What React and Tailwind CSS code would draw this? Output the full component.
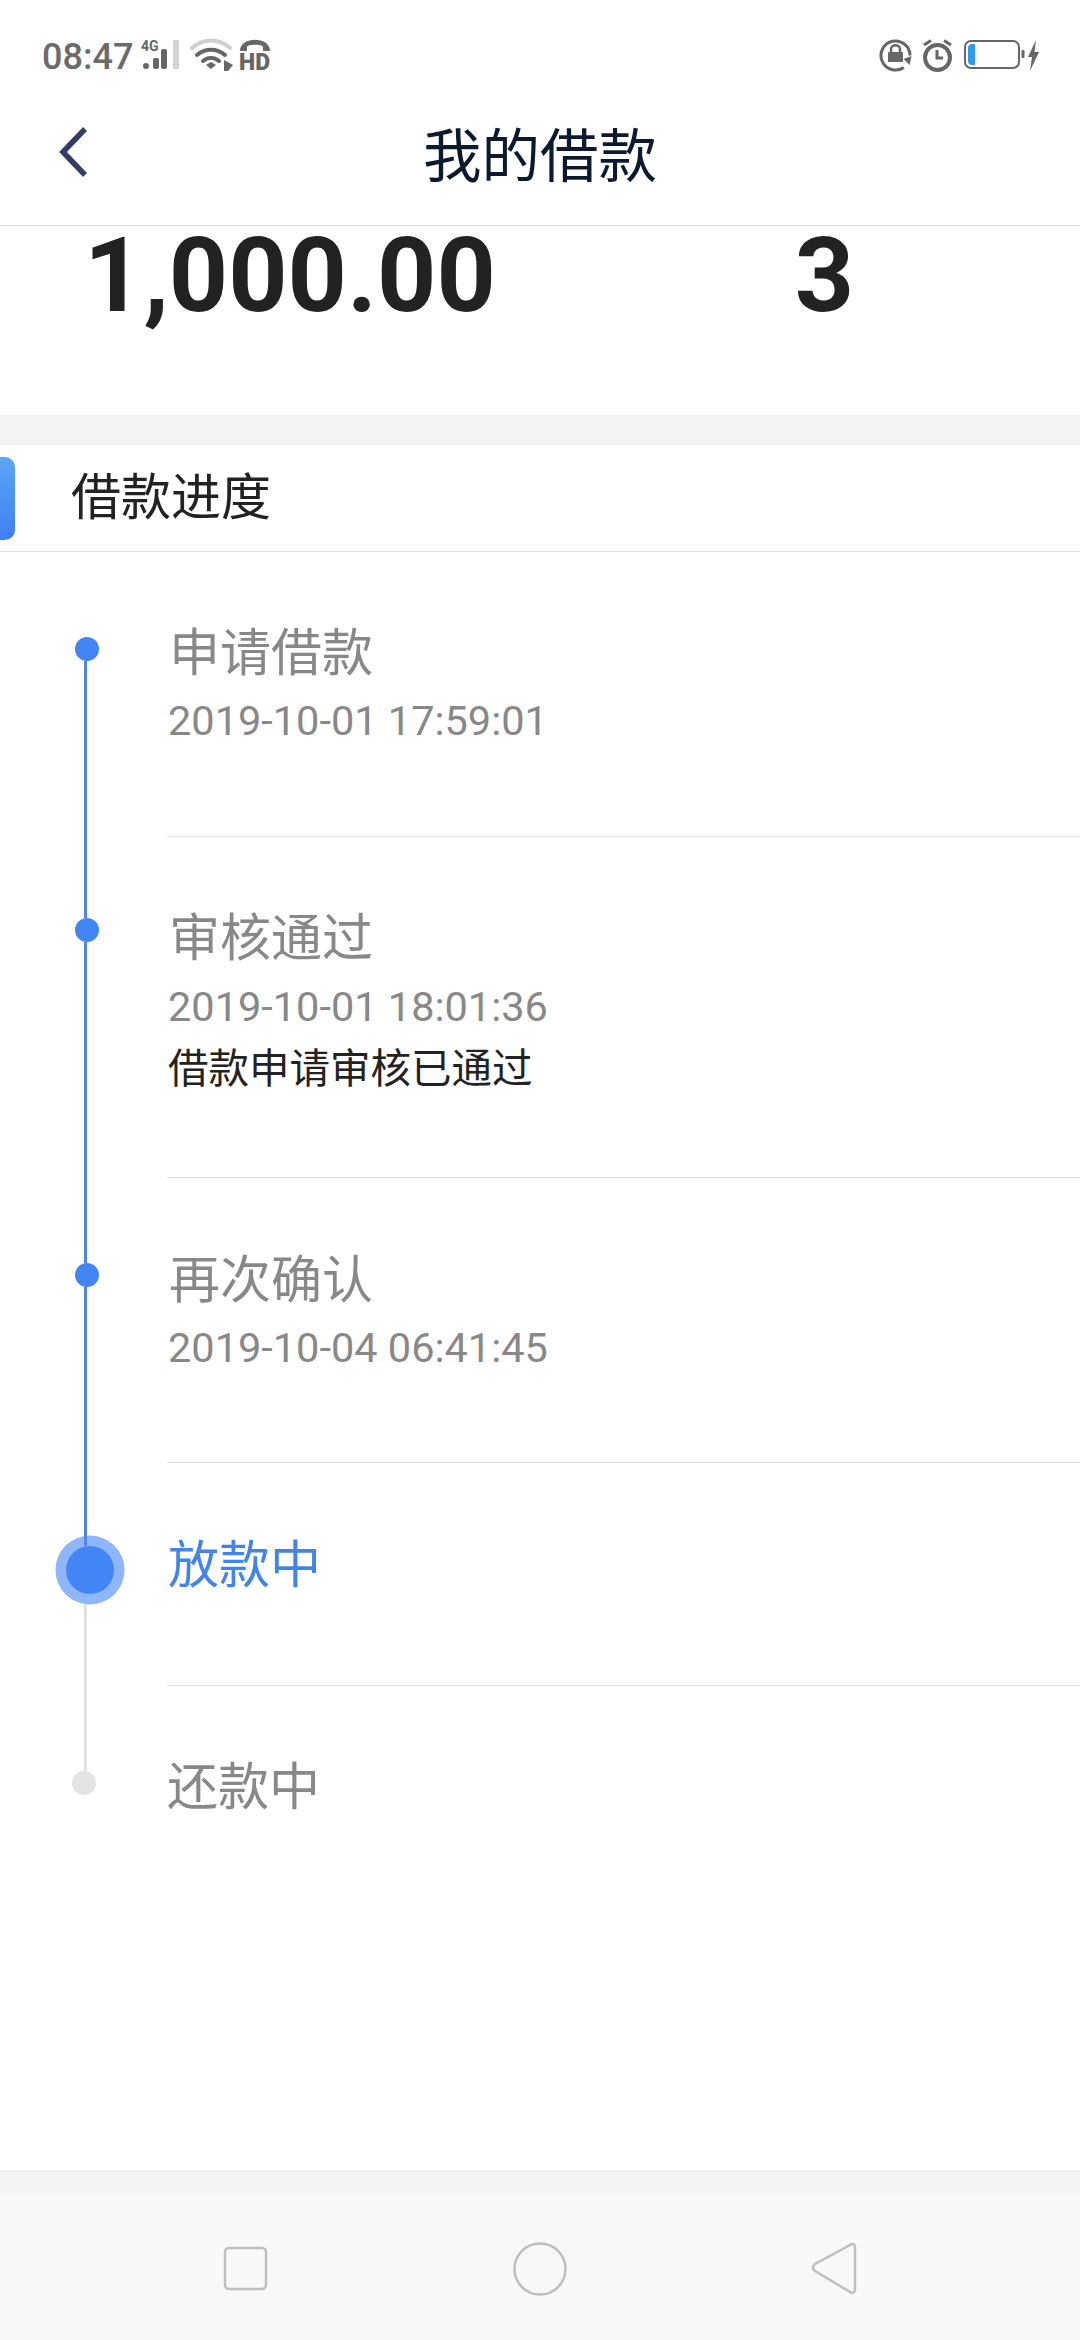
const cjk = { fontFamily: '"Noto Sans CJK SC", sans-serif' };

function StatusLeft() {
  return (
    <div className="flex items-center">
      <span className="text-[36px] leading-[44px] font-medium text-[#6a6a6a]" style={{ fontFamily: 'Roboto, sans-serif' }}>08:47</span>
      <svg className="mt-[-4px] ml-[8px]" width="40" height="32" viewBox="0 0 40 32">
        <text x="0" y="12" fontSize="14" fontWeight="700" fill="#666" fontFamily="Roboto, sans-serif">4G</text>
        <circle cx="5" cy="27" r="3" fill="#666" />
        <rect x="12" y="19" width="6" height="11" rx="2" fill="#666" />
        <rect x="20" y="10" width="6" height="20" rx="2" fill="#666" />
        <rect x="32" y="1" width="6" height="29" rx="1" fill="#d4d4d4" />
      </svg>
      <svg className="mt-[-4px] ml-[9px]" width="44" height="34" viewBox="0 0 44 34">
        <path d="M2 10 C13 0 29 0 40 10" fill="none" stroke="#cfcfcf" strokeWidth="4" strokeLinecap="round" />
        <path d="M7 17 C15 10 27 10 35 17" fill="none" stroke="#666" strokeWidth="4" strokeLinecap="round" />
        <path d="M13 23 C18 19 24 19 29 23" fill="none" stroke="#666" strokeWidth="4" strokeLinecap="round" />
        <path d="M16 27 L21 24 L26 27 L21 31 Z" fill="#666" />
        <path d="M34 33 L34 22 L43 27 L38 33 Z" fill="#666" />
      </svg>
      <svg className="mt-[2px] ml-[5px]" width="32" height="40" viewBox="0 0 32 40">
        <path d="M1 13 C1 -2 31 -2 31 13 L24 13 L24 9 C24 6 8 6 8 9 L8 13 Z" fill="#666" />
        <text x="0" y="32" fontSize="24" fontWeight="900" fill="#666" fontFamily="Roboto, sans-serif" textLength="31" lengthAdjust="spacingAndGlyphs">HD</text>
      </svg>
    </div>
  );
}

function StatusRight() {
  return (
    <div className="mt-[4px] flex items-center">
      <svg width="33" height="33" viewBox="0 0 33 33">
        <path d="M24.8 28.4 A14.5 14.5 0 1 1 31 16.5" fill="none" stroke="#666" strokeWidth="3" />
        <path d="M24.5 20 L32.5 17 L30.5 26 Z" fill="#666" />
        <rect x="9" y="13" width="15" height="10" rx="1" fill="#666" />
        <path d="M12 13 V10 C12 5 21 5 21 10 V13" fill="none" stroke="#666" strokeWidth="2.5" />
      </svg>
      <svg className="ml-[10px]" width="31" height="33" viewBox="0 0 31 33">
        <circle cx="15.5" cy="18.5" r="12.5" fill="none" stroke="#666" strokeWidth="4" />
        <path d="M15 11 V19 H21" fill="none" stroke="#666" strokeWidth="3" />
        <path d="M2 6 L9 1.5 M29 6 L22 1.5" stroke="#666" strokeWidth="3" />
      </svg>
      <svg className="ml-[11px]" width="76" height="33" viewBox="0 0 76 33">
        <rect x="1" y="2" width="54" height="27" rx="6" fill="none" stroke="#666" strokeWidth="2" />
        <path d="M4 9 C4 6 6 5 8 5 H11 V26 H8 C6 26 4 25 4 22 Z" fill="#2f9bf0" />
        <rect x="57.5" y="11" width="3" height="8" rx="1" fill="#666" />
        <path d="M72 1 L64 18 L68 18 L66 32 L75 13 L70.5 13 Z" fill="#666" />
      </svg>
    </div>
  );
}

function Line({ h, grey }) {
  return <div className={`relative z-10 ml-[84px] w-[3px] ${grey ? 'bg-[#e0e0e0]' : 'bg-[#4f86e3]'} ${h}`} />;
}

function Dot() {
  return <div className="ml-[75px] h-[24px] w-[24px] rounded-full bg-[#4285f4]" />;
}

function TextBlock({ title, date, note, titleClass = 'text-[#888]', indent = 'pl-[2px]', pt, dateGap = 'mt-[15px]' }) {
  return (
    <div className={`flex-1 border-b border-[#e3e3e3] ${pt}`}>
      <div className={`${indent} text-[51px] leading-[64px] ${titleClass}`} style={cjk}>{title}</div>
      {date && (
        <div className={`${dateGap} pl-[1px] text-[41.5px] leading-[50px] text-[#888]`} style={{ fontFamily: 'Roboto, sans-serif' }}>{date}</div>
      )}
      {note && <div className="mt-[9px] pl-[1px] text-[40.5px] leading-[50px] text-[#222]" style={cjk}>{note}</div>}
    </div>
  );
}

function Row({ left, height, children }) {
  return (
    <div className={`flex ${height}`}>
      <div className="flex w-[167px] flex-col">{left}</div>
      {children}
    </div>
  );
}

export default function App() {
  return (
    <div className="flex h-[2340px] w-[1080px] flex-col overflow-hidden bg-white">
      <div className="flex h-[105px] items-start justify-between pt-[35px] pr-[40px] pl-[42px]">
        <StatusLeft />
        <StatusRight />
      </div>

      <div className="flex h-[121px] items-center border-b border-[#e3e3e3] pb-[26px]">
        <svg className="ml-[58px]" width="30" height="50" viewBox="0 0 30 50">
          <path d="M27 2 L5 25 L27 48" fill="none" stroke="#333d66" strokeWidth="5.5" />
        </svg>
        <div className="ml-[335px] text-[58.5px] leading-[70px] text-[#0d1a2e]" style={cjk}>我的借款</div>
      </div>

      <div className="flex h-[189px] items-start text-[103.5px] leading-[100px] font-bold text-[#222]" style={{ fontFamily: 'Roboto, sans-serif' }}>
        <span className="ml-[84px]">1,000.00</span>
        <span className="ml-[299px]">3</span>
      </div>

      <div className="h-[30px] bg-[#f3f3f3]" />

      <div className="flex h-[107px] items-center border-b border-[#e3e3e3]">
        <div className="h-[83px] w-[15px] rounded-r-[10px] bg-gradient-to-b from-[#5ba6f8] to-[#3f7ff0]" />
        <div className="mb-[10px] ml-[56px] text-[50px] leading-[64px] text-[#222]" style={cjk}>借款进度</div>
      </div>

      <Row height="h-[285px]" left={<><div className="h-[85px]" /><Dot /><Line h="flex-1" /></>}>
        <TextBlock title="申请借款" date="2019-10-01 17:59:01" pt="pt-[65px]" />
      </Row>

      <Row height="h-[341px]" left={<><Line h="h-[81px]" /><Dot /><Line h="flex-1" /></>}>
        <TextBlock title="审核通过" date="2019-10-01 18:01:36" note="借款申请审核已通过" pt="pt-[65px]" dateGap="mt-[16px]" />
      </Row>

      <Row height="h-[285px]" left={<><Line h="h-[85px]" /><Dot /><Line h="flex-1" /></>}>
        <TextBlock title="再次确认" date="2019-10-04 06:41:45" pt="pt-[66px]" dateGap="mt-[15px]" />
      </Row>

      <Row height="h-[223px]" left={
        <>
          <Line h="h-[83px]" />
          <div className="ml-[66px] h-[48px] w-[48px] rounded-full bg-[#4285f4] shadow-[0_0_0_10.5px_rgba(66,133,244,0.6)]" />
          <div className="h-[10px]" />
          <Line h="flex-1" grey />
        </>
      }>
        <TextBlock title="放款中" titleClass="text-[#4285e8]" indent="pl-[1px]" pt="pt-[66px]" />
      </Row>

      <div className="flex h-[484px]">
        <div className="flex w-[167px] flex-col">
          <Line h="h-[85px]" grey />
          <div className="ml-[72px] h-[24px] w-[24px] rounded-full bg-[#e3e3e3]" />
        </div>
        <div className="pt-[65px] text-[51px] leading-[64px] text-[#888]" style={cjk}>还款中</div>
      </div>

      <div className="h-[25px] bg-[#f3f3f3]" />

      <div className="flex flex-1 items-center bg-[#f8f8f8] pt-[2px]">
        <svg className="ml-[223px]" width="46" height="46" viewBox="0 0 46 46">
          <rect x="2" y="2" width="41" height="41" rx="4" fill="none" stroke="#bfbfbf" strokeWidth="2.5" />
        </svg>
        <svg className="ml-[243px]" width="56" height="56" viewBox="0 0 56 56">
          <circle cx="28" cy="28" r="25.5" fill="none" stroke="#bfbfbf" strokeWidth="2.5" />
        </svg>
        <svg className="ml-[242px]" width="48" height="56" viewBox="0 0 48 56">
          <path d="M40 4 C42 2 45 3 45 6 V48 C45 52 42 53 40 51 L5 30 C2 28 2 25 5 23 Z" fill="none" stroke="#bfbfbf" strokeWidth="2.5" />
        </svg>
      </div>
    </div>
  );
}
